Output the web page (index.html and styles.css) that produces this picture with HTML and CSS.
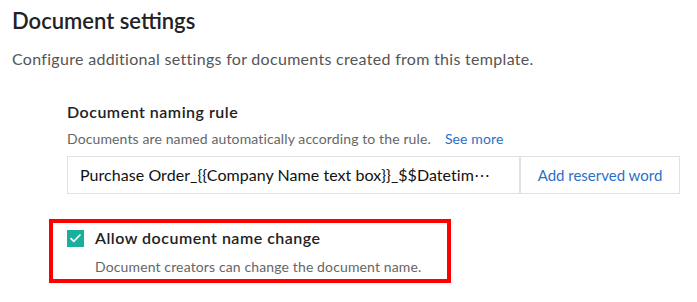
FILE: index.html
```html
<!DOCTYPE html>
<html lang="en">
<head>
  <meta charset="UTF-8">
  <meta name="viewport" content="width=device-width,initial-scale=1"/>
  <title>Document settings</title>
  <link rel="stylesheet" href="styles.css">
</head>
<body>
  <div class="page">
    <h1>Document settings</h1>
    <p class="intro">Configure additional settings for documents created from this template.</p>

    <div class="rule">
      <h2>Document naming rule</h2>
      <p class="hint">Documents are named automatically according to the rule.<a href="#">See more</a></p>
      <div class="field">
        <div class="value">Purchase Order_{{Company Name text box}}_$$Datetim⋯</div>
        <button class="add">Add reserved word</button>
      </div>
    </div>

    <div class="allow">
      <label class="check">
        <span class="box">
          <svg width="13" height="10" viewBox="0 0 13 10"><path d="M1.5 5.2 L4.8 8.3 L11.5 1.5" fill="none" stroke="#fff" stroke-width="1.6"/></svg>
        </span>
        Allow document name change
      </label>
      <p class="hint">Document creators can change the document name.</p>
    </div>
  </div>
</body>
</html>
```

FILE: styles.css
```css
*{
  margin: 0; padding: 0;
  box-sizing: border-box;
}
body{
  font-family: Lato, "Noto Sans", sans-serif;
  background: #fff;
  color: #222;
}
.page{
  padding: 6px 12px 0 12px;
}
h1{
  font-size: 22px;
  font-weight: 600;
  line-height: 30px;
  color: #222;
}
.intro{
  margin-top: 12px;
  font-size: 16px;
  line-height: 22px;
  letter-spacing: 0.3px;
  color: #555;
}
.rule{
  margin: 31px 0 0 55px;
}
h2{
  font-size: 16px;
  font-weight: 600;
  line-height: 22px;
  letter-spacing: 0.5px;
  color: #222;
}
.hint{
  margin-top: 7px;
  font-size: 14px;
  line-height: 18px;
  letter-spacing: 0.12px;
  color: #666;
}
.hint a{
  margin-left: 14px;
  color: #2b6fc8;
  text-decoration: none;
}
.field{
  display: flex;
  width: 613px;
  height: 38px;
  margin-top: 8px;
  border: 1px solid #e2e2e2;
}
.value{
  flex: 1;
  padding: 0 12px;
  font-size: 16px;
  line-height: 36px;
  letter-spacing: 0.05px;
  color: #111;
  white-space: nowrap;
  overflow: hidden;
}
.add{
  width: 160px;
  border: 0;
  border-left: 2px solid #e2e2e2;
  background: #fff;
  font-family: inherit;
  font-size: 15px;
  color: #2b6fc8;
}
.allow{
  width: 402px;
  margin: 25px 0 0 37px;
  padding: 4px 14px 3px 14px;
  border: 4px solid #f00;
}
.check{
  display: flex;
  align-items: center;
  gap: 11px;
  font-size: 16px;
  font-weight: 600;
  line-height: 22px;
  letter-spacing: 0.5px;
  color: #222;
}
.box{
  display: flex;
  align-items: center;
  justify-content: center;
  width: 17px;
  height: 17px;
  background: #1aaf9c;
}
.allow .hint{
  margin: 9px 0 0 28px;
  letter-spacing: 0.13px;
}
```
